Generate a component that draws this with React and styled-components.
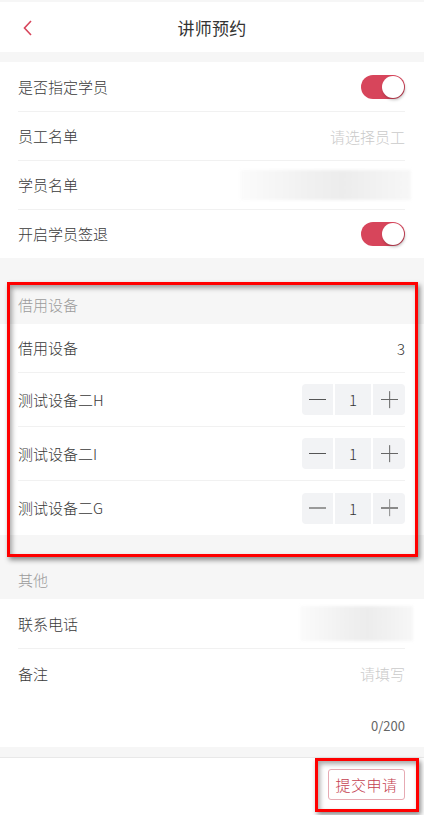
import React from 'react';
import styled, { createGlobalStyle } from 'styled-components';

const RED = '#d7455b';
const FONT = '"Noto Sans CJK SC", "Noto Sans", sans-serif';

const GlobalStyle = createGlobalStyle`
  html, body {
    margin: 0;
    padding: 0;
    background: #f6f6f6;
    font-family: ${FONT};
  }
  * { box-sizing: border-box; }
`;

const Page = styled.div`
  position: relative;
  width: 424px;
  height: 815px;
  overflow: hidden;
  background: #f6f6f6;
  padding-top: 2px;
  display: flex;
  flex-direction: column;
`;

const Header = styled.div`
  position: relative;
  height: 50px;
  background: #fff;
  display: flex;
  align-items: center;
  justify-content: center;
  margin-bottom: 10px;
`;

const Back = styled.div`
  position: absolute;
  left: 22px;
  top: 18px;
  width: 12px;
  height: 16px;
  display: flex;
`;

const Title = styled.div`
  font-size: 17px;
  color: #333;
  letter-spacing: 0.3px;
`;

const Section = styled.div`
  background: #fff;
  padding: 0 19px 0 18px;
`;

const SectionTitle = styled.div`
  height: 39px;
  margin-top: ${(p) => p.$gap}px;
  padding-left: 18px;
  display: flex;
  align-items: center;
  font-size: 15px;
  font-weight: 300;
  color: #9b9b9b;
`;

const Row = styled.div`
  height: ${(p) => p.$h || 49}px;
  display: flex;
  align-items: center;
  justify-content: space-between;
  border-top: ${(p) => (p.$first ? 'none' : '1px solid #f1f1f1')};
`;

const Label = styled.span`
  font-size: 15px;
  font-weight: 300;
  color: #3a3a3a;
  margin-top: -1px;
`;

const Placeholder = styled.span`
  font-size: 15px;
  font-weight: 300;
  color: #cacaca;
`;

const Value = styled.span`
  font-size: 15px;
  font-weight: 300;
  color: #333;
`;

const Track = styled.div`
  width: 44px;
  height: 24px;
  border-radius: 12px;
  background: ${RED};
  position: relative;
`;

const Knob = styled.div`
  position: absolute;
  right: 1px;
  top: 1px;
  width: 22px;
  height: 22px;
  border-radius: 50%;
  background: #fff;
  box-shadow: 1px 2px 3px rgba(0, 0, 0, 0.25);
`;

const Blurred = styled.div`
  width: ${(p) => p.$w}px;
  height: ${(p) => p.$h}px;
  margin-right: ${(p) => p.$mr}px;
  background: linear-gradient(90deg, #fbfbfb 0%, #efefef 45%, #ececec 60%, #f7f7f7 100%);
  filter: blur(1.5px);
`;

const Stepper = styled.div`
  display: flex;
  gap: 2px;
  height: 31px;
`;

const StepBtn = styled.div`
  width: ${(p) => p.$w}px;
  background: #f2f3f5;
  border-radius: ${(p) => p.$radius};
  display: flex;
  align-items: center;
  justify-content: center;
  font-size: 15px;
  font-weight: 300;
  color: #333;
  position: relative;
`;

const Line = styled.div`
  position: absolute;
  width: 17px;
  height: 1.3px;
  background: ${(p) => p.$color};
  transform: rotate(${(p) => (p.$vertical ? '90deg' : '0deg')});
`;

const RemarkRow = styled.div`
  height: 99px;
  border-top: 1px solid #f1f1f1;
  display: flex;
  flex-direction: column;
`;

const RemarkTop = styled.div`
  height: 49px;
  display: flex;
  align-items: center;
  justify-content: space-between;
`;

const Counter = styled.div`
  margin-top: 18px;
  text-align: right;
  font-size: 13px;
  color: #666;
`;

const Footer = styled.div`
  margin-top: 10px;
  flex: 1;
  background: #fff;
  border-top: 1px solid #e8e8e8;
  display: flex;
  justify-content: flex-end;
  padding: 11px 19px 0 0;
`;

const SubmitButton = styled.button`
  width: 77px;
  height: 31px;
  border: 1px solid #e6aab3;
  border-radius: 3px;
  background: #fff;
  color: #c4404f;
  font-family: ${FONT};
  font-size: 15px;
  font-weight: 300;
  padding: 0;
  letter-spacing: 0.5px;
`;

const Highlight = styled.div`
  position: absolute;
  left: ${(p) => p.$x}px;
  top: ${(p) => p.$y}px;
  width: ${(p) => p.$w}px;
  height: ${(p) => p.$h}px;
  border: 3.5px solid #ff0000;
  box-shadow: 2px 3px 5px rgba(0, 0, 0, 0.45), inset 2px 3px 5px rgba(0, 0, 0, 0.35);
  pointer-events: none;
`;

function Toggle() {
  return (
    <Track>
      <Knob />
    </Track>
  );
}

function Counter1({ dim }) {
  const c = dim ? '#9a9a9a' : '#555';
  return (
    <Stepper>
      <StepBtn $w={31} $radius="4px 0 0 4px">
        <Line $color={c} />
      </StepBtn>
      <StepBtn $w={36} $radius="0">1</StepBtn>
      <StepBtn $w={32} $radius="0 4px 4px 0">
        <Line $color={dim ? '#8a8a8a' : '#666'} />
        <Line $color={dim ? '#8a8a8a' : '#666'} $vertical />
      </StepBtn>
    </Stepper>
  );
}

const devices = [
  { name: '测试设备二H' },
  { name: '测试设备二I' },
  { name: '测试设备二G', dim: true },
];

export default function App() {
  return (
    <>
      <GlobalStyle />
      <Page>
        <Header>
          <Back>
            <svg width="12" height="16" viewBox="0 0 12 16">
              <polyline points="9,1 2.5,8 9,15" fill="none" stroke={RED} strokeWidth="1.6" />
            </svg>
          </Back>
          <Title>讲师预约</Title>
        </Header>

        <Section>
          <Row $first>
            <Label>是否指定学员</Label>
            <Toggle />
          </Row>
          <Row>
            <Label>员工名单</Label>
            <Placeholder>请选择员工</Placeholder>
          </Row>
          <Row>
            <Label>学员名单</Label>
            <Blurred $w={171} $h={30} $mr={-6} />
          </Row>
          <Row>
            <Label>开启学员签退</Label>
            <Toggle />
          </Row>
        </Section>

        <SectionTitle $gap={27}>借用设备</SectionTitle>
        <Section>
          <Row $first $h={48}>
            <Label>借用设备</Label>
            <Value>3</Value>
          </Row>
          {devices.map((d, i) => (
            <Row key={d.name} $h={i === 2 ? 55 : 54}>
              <Label>{d.name}</Label>
              <Counter1 dim={d.dim} />
            </Row>
          ))}
        </Section>

        <SectionTitle $gap={25}>其他</SectionTitle>
        <Section>
          <Row $first>
            <Label>联系电话</Label>
            <Blurred $w={113} $h={35} $mr={-8} />
          </Row>
          <RemarkRow>
            <RemarkTop>
              <Label>备注</Label>
              <Placeholder>请填写</Placeholder>
            </RemarkTop>
            <Counter>0/200</Counter>
          </RemarkRow>
        </Section>

        <Footer>
          <SubmitButton>提交申请</SubmitButton>
        </Footer>

        <Highlight $x={7} $y={282} $w={411} $h={275} />
        <Highlight $x={315} $y={758} $w={104} $h={54} />
      </Page>
    </>
  );
}
